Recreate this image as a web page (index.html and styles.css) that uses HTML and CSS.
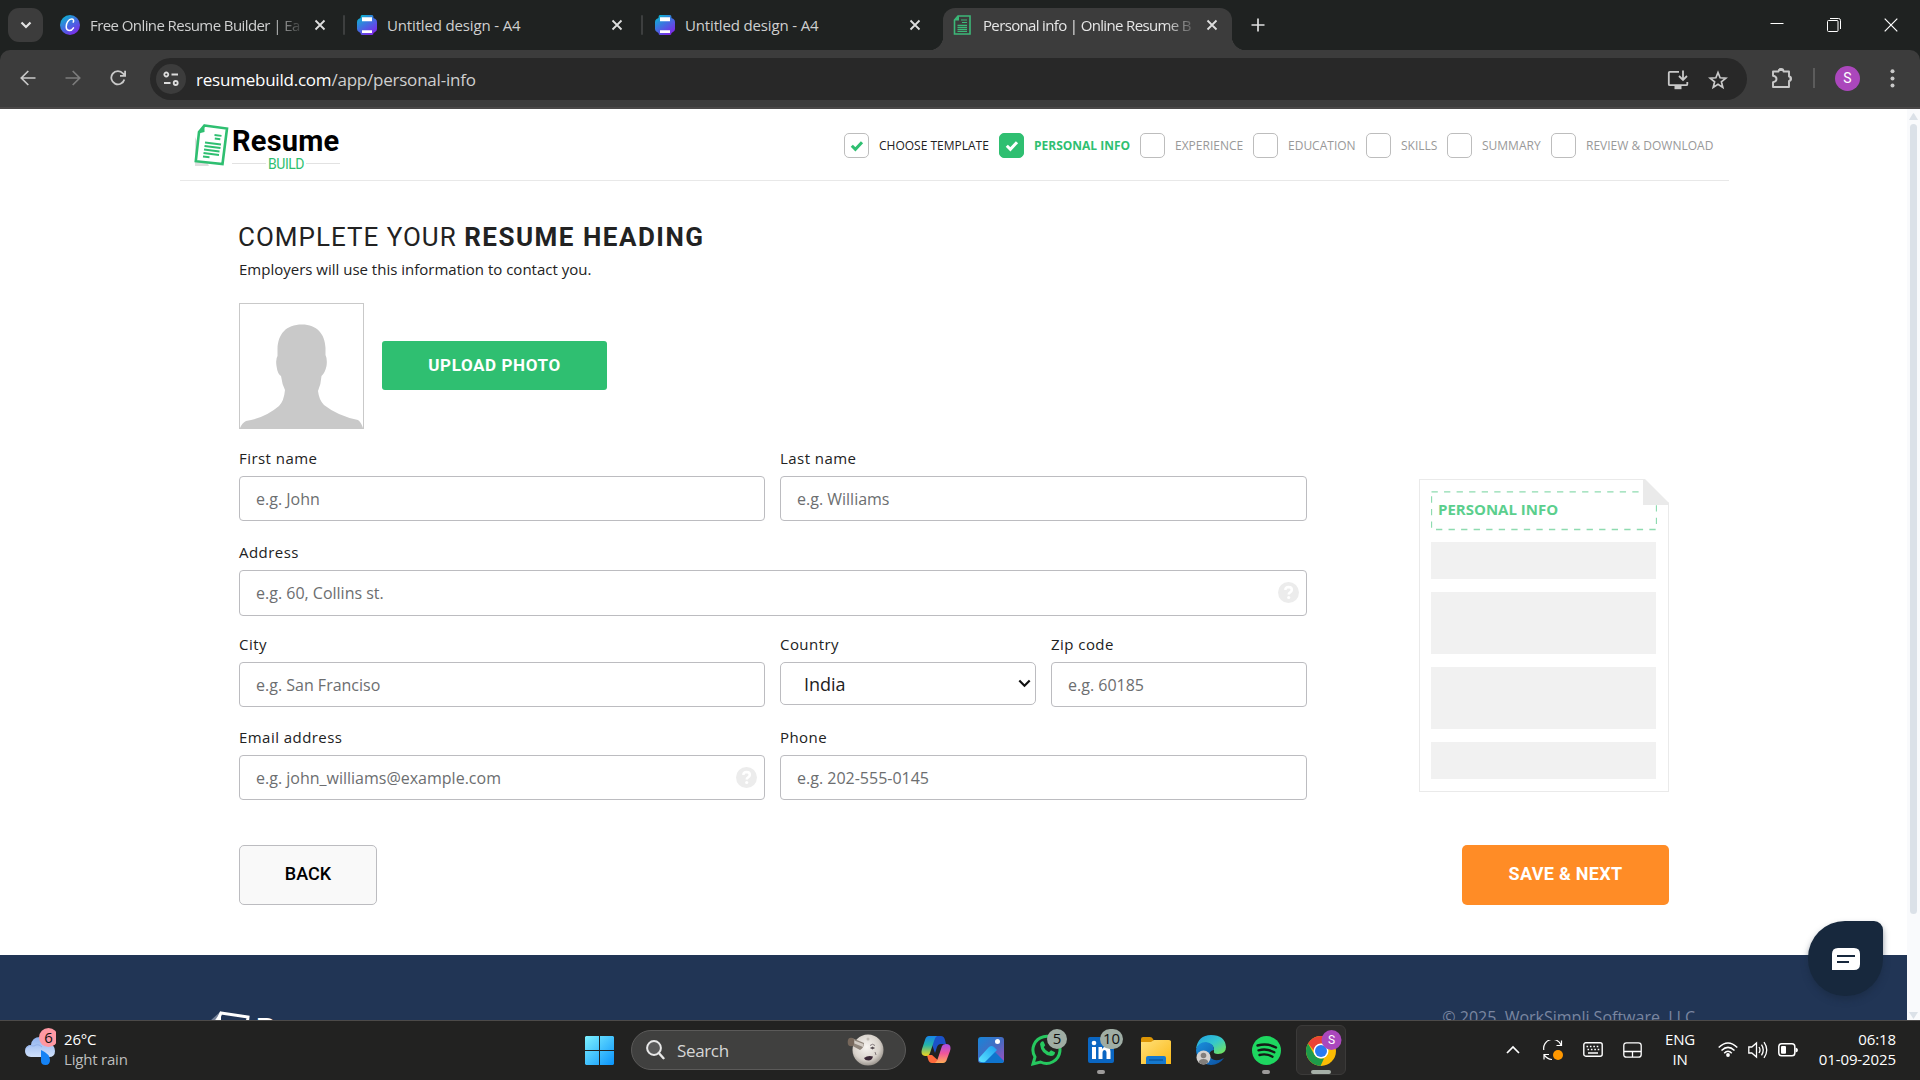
FILE: index.html
```html
<!DOCTYPE html>
<html lang="en">
<head>
<meta charset="utf-8">
<title>Personal info | Online Resume Builder</title>
<link rel="stylesheet" href="styles.css">
</head>
<body>
<svg class="defs" width="0" height="0" aria-hidden="true">
  <defs>
    <linearGradient id="canva" x1="0" y1="0" x2=".7" y2="1"><stop offset="0" stop-color="#00c4cc"/><stop offset=".5" stop-color="#3d73e0"/><stop offset="1" stop-color="#7d2ae8"/></linearGradient>
    <linearGradient id="win" x1="0" y1="0" x2="1" y2="1"><stop offset="0" stop-color="#7df1ff"/><stop offset="1" stop-color="#0a93fb"/></linearGradient>
    <linearGradient id="cloud" x1="0" y1="0" x2="0" y2="1"><stop offset="0" stop-color="#8fb2ee"/><stop offset="1" stop-color="#cfe0fb"/></linearGradient>
    <linearGradient id="cpL" x1="0" y1="0" x2="0" y2="1"><stop offset="0" stop-color="#1784ea"/><stop offset=".45" stop-color="#25b5a8"/><stop offset="1" stop-color="#f3d51c"/></linearGradient>
    <linearGradient id="cpR" x1="0" y1="0" x2="0" y2="1"><stop offset="0" stop-color="#a64ee8"/><stop offset=".5" stop-color="#f0569a"/><stop offset="1" stop-color="#ffad56"/></linearGradient>
    <linearGradient id="photo" x1="0" y1="0" x2="1" y2="1"><stop offset="0" stop-color="#1686d9"/><stop offset=".55" stop-color="#4a69c0"/><stop offset="1" stop-color="#a24fc0"/></linearGradient>
    <linearGradient id="hill" x1="0" y1="1" x2="1" y2="0"><stop offset="0" stop-color="#5ce4ff"/><stop offset="1" stop-color="#1b9df0"/></linearGradient>
    <linearGradient id="folder" x1="0" y1="0" x2="1" y2="1"><stop offset="0" stop-color="#ffe07a"/><stop offset="1" stop-color="#fbb917"/></linearGradient>
    <linearGradient id="edge1" x1="0" y1="0" x2="1" y2="1"><stop offset="0" stop-color="#1f9fe5"/><stop offset=".5" stop-color="#35c7cd"/><stop offset="1" stop-color="#7be84e"/></linearGradient>
    <linearGradient id="edge2" x1="0" y1="0" x2="1" y2="1"><stop offset="0" stop-color="#1a90dd"/><stop offset="1" stop-color="#0b4fa0"/></linearGradient>
    <radialGradient id="moon" cx=".45" cy=".4" r=".65"><stop offset="0" stop-color="#f8f5f1"/><stop offset=".65" stop-color="#d8d2cb"/><stop offset="1" stop-color="#8d8780"/></radialGradient>
    <symbol id="i-x" viewBox="0 0 12 12"><path d="M1.5 1.5l9 9M10.5 1.5l-9 9" stroke="#dedede" stroke-width="1.8" fill="none"/></symbol>
    <symbol id="i-design" viewBox="0 0 20 20"><path d="M5 0h10q1.500 0 1.500 3l2 1q1.500.8 1.500 3v7q0 2-2 3l-1.500 1q0 2-1.500 2H5q-1.500 0-1.500-2L2 17q-2-1-2-3V7q0-2 1.500-3l2-1q0-3 1.500-3z" fill="url(#canva)"/><path d="M5 2.200h10v4H5zM5 15.300h10v2.600H5z" fill="#fff"/></symbol>
    <symbol id="i-help" viewBox="0 0 20 20"><circle cx="10" cy="10" r="10" fill="#ececec"/><path d="M6.900 7.600Q7.200 4.800 10.100 4.800 13.200 4.900 13.200 7.500 13.100 9 11.500 9.800 10.200 10.500 10.200 12" fill="none" stroke="#fff" stroke-width="2.400"/><circle cx="10.200" cy="14.800" r="1.500" fill="#fff"/></symbol>
  </defs>
</svg>

<div class="tabstrip">
  <button class="tab-search" aria-label="Search tabs"><svg width="12" height="8" viewBox="0 0 12 8"><path d="M1.500 1.500L6 6l4.500-4.500" fill="none" stroke="#e3e3e3" stroke-width="2.200"/></svg></button>
  <div class="tab tab-first">
    <svg class="fav" viewBox="0 0 20 20"><circle cx="10" cy="10" r="10" fill="url(#canva)"/><path d="M13.200 7.200c1-1.600.3-3.200-1.600-3.100C8.600 4.200 6 8.200 6.200 12c.2 4.500 5 4.600 7.300.8" fill="none" stroke="#fff" stroke-width="1.500" stroke-linecap="round"/></svg>
    <span class="tab-title fade t1">Free Online Resume Builder | Ea</span>
    <svg class="tab-x"><use href="#i-x"/></svg>
  </div>
  <i class="tab-sep"></i>
  <div class="tab">
    <svg class="fav"><use href="#i-design"/></svg>
    <span class="tab-title">Untitled design - A4</span>
    <svg class="tab-x"><use href="#i-x"/></svg>
  </div>
  <i class="tab-sep"></i>
  <div class="tab">
    <svg class="fav"><use href="#i-design"/></svg>
    <span class="tab-title">Untitled design - A4</span>
    <svg class="tab-x"><use href="#i-x"/></svg>
  </div>
  <div class="tab active">
    <svg class="fav" viewBox="0 0 20 20"><path d="M5 1h12v18H1.500V5z" fill="none" stroke="#3cb878" stroke-width="1.600"/><path d="M1 5.500L6 .5v5z" fill="#3cb878"/><path d="M8 5h6M9 7.500h5M4.500 10.300h9.500M4.500 12.300h9.500M4.500 14.300h9.500M4.500 16.300h9.500" stroke="#3cb878" stroke-width="1.200"/></svg>
    <span class="tab-title fade t4">Personal info | Online Resume B</span>
    <svg class="tab-x"><use href="#i-x"/></svg>
  </div>
  <svg class="plus" width="14" height="14" viewBox="0 0 14 14"><path d="M7 .5v13M.5 7h13" stroke="#dedede" stroke-width="1.700"/></svg>
  <div class="win-controls">
    <svg width="14" height="14" viewBox="0 0 14 14"><path d="M.5 5.500h13" stroke="#fff"/></svg>
    <svg width="14" height="14" viewBox="0 0 14 14" fill="none" stroke="#fff"><rect x=".5" y="2.500" width="10.500" height="11" rx="1"/><path d="M3 .5h8.500q2 0 2 2V11"/></svg>
    <svg width="14" height="14" viewBox="0 0 14 14"><path d="M.7.700l12.600 12.600M13.300.7L.7 13.300" stroke="#fff" stroke-width="1.200"/></svg>
  </div>
</div>

<div class="toolbar">
  <svg class="nav-ic" viewBox="0 0 16 16"><path d="M15.500 8H1.500M8.300 1L1.300 8l7 7" fill="none" stroke="#c9c9c9" stroke-width="1.700"/></svg>
  <svg class="nav-ic" viewBox="0 0 16 16"><path d="M.5 8h14M7.700 1l7 7-7 7" fill="none" stroke="#7c7c7c" stroke-width="1.700"/></svg>
  <svg class="nav-ic" viewBox="0 0 16 16"><path d="M14.300 9.400A6.600 6.600 0 1 1 13 3.500L15 5.500M15.100.8v5H10" fill="none" stroke="#c9c9c9" stroke-width="1.800"/></svg>
  <div class="omnibox">
    <span class="site-info"><svg width="16" height="16" viewBox="0 0 16 16" fill="none" stroke="#dcdcdc" stroke-width="1.800"><circle cx="3.300" cy="3.500" r="2"/><path d="M8.500 3.500H15M1 12h6.500"/><circle cx="12.700" cy="12" r="2"/></svg></span>
    <span class="url">resumebuild.com<span>/app/personal-info</span></span>
    <svg class="install" width="22" height="20" viewBox="0 0 22 20" fill="none" stroke="#c9c9c9" stroke-width="1.800"><path d="M12 1.800H2.800q-1 0-1 1v11.400q0 1 1 1h16.500q1 0 1-1V12"/><path d="M7.500 17.500h7" stroke-width="3.400"/><path d="M16 .5v9M12 6l4 4 4-4"/></svg>
    <svg width="20" height="20" viewBox="0 0 20 20"><path d="M10 2.500l2.100 5.300 5.700.4-4.400 3.600 1.400 5.600-4.800-3.100-4.800 3.100 1.400-5.600-4.400-3.600 5.700-.4z" fill="none" stroke="#c9c9c9" stroke-width="1.700"/></svg>
  </div>
  <svg class="puzzle" width="22" height="22" viewBox="0 0 22 22"><path d="M2 4.500h5.500q0-2.500 2.500-2.500t2.500 2.500H18v5q2 0 2 2.200T18 14v6H2v-4.800q3.500-.6 3.500-3.200T2 8.800z" fill="none" stroke="#c9c9c9" stroke-width="1.900" stroke-linejoin="round"/><path d="M7.700 4q0-2.400 2.300-2.400T12.300 4zM18.500 9.500q2.200 0 2.200 2.300T18.500 14z" fill="#c9c9c9"/></svg>
  <i class="bar-sep"></i>
  <span class="avatar">S</span>
  <svg class="dots" width="5" height="19" viewBox="0 0 5 19" fill="#c9c9c9"><circle cx="2.500" cy="2.300" r="2"/><circle cx="2.500" cy="9.400" r="2"/><circle cx="2.500" cy="16.500" r="2"/></svg>
</div>

<div class="viewport">
  <div class="page">
    <header class="site-header">
      <div class="logo">
        <svg width="36" height="44" viewBox="0 0 36 44"><path d="M1 14v29h14z" fill="#dedede"/><path d="M10.500 2.500L33 5.500 28.500 41 1.800 38.200 5 9z" fill="#fff" stroke="#2fbf71" stroke-width="2.600"/><path d="M4.500 10.500L10.500 2v7z" fill="#2fbf71"/><path d="M20.500 12l7 .9M20.800 15.500l5.500.7M11 19.500l16 2M10.500 23l16 2M10 26.500l15.500 2M9.500 30l15.500 2M9 33.500l6.500.8" stroke="#2fbf71" stroke-width="1.900"/></svg>
        <div class="logo-words"><b>Resume</b><span>BUILD</span></div>
      </div>
      <ol class="steps">
        <li class="done"><i><svg width="14" height="12" viewBox="0 0 14 12"><path d="M1.800 5.700l3.600 3.600L12 2.200" fill="none" stroke="#2fbf71" stroke-width="3"/></svg></i><span class="s1">CHOOSE TEMPLATE</span></li>
        <li class="current"><i><svg width="14" height="12" viewBox="0 0 14 12"><path d="M1.800 5.700l3.600 3.600L12 2.200" fill="none" stroke="#fff" stroke-width="3"/></svg></i><span class="s2">PERSONAL INFO</span></li>
        <li><i></i><span class="s3">EXPERIENCE</span></li>
        <li><i></i><span class="s4">EDUCATION</span></li>
        <li><i></i><span class="s5">SKILLS</span></li>
        <li><i></i><span class="s6">SUMMARY</span></li>
        <li><i></i><span class="s7">REVIEW &amp; DOWNLOAD</span></li>
      </ol>
    </header>

    <main>
      <h1><span>COMPLETE YOUR</span> <b>RESUME HEADING</b></h1>
      <p class="lead">Employers will use this information to contact you.</p>
      <div class="photo-row">
        <div class="photo"><svg width="123" height="124" viewBox="0 0 123 124"><path d="M62 20.500C46 20.500 38 30 37.500 45V52Q35.500 55 36.500 62 37.500 70 41 72 42 80 45 86 44 97 39 102 25 114 6 117 2 119 0 124H123Q121 118 118 116 98 112 84 101 79 96 78 87 81 80 81.500 72 85 69 86.500 62 87.500 55 85.500 51V44C85 30 77 20.500 62 20.500z" fill="#c9c9c9"/></svg></div>
        <button class="upload">UPLOAD PHOTO</button>
      </div>
      <div class="columns">
        <form class="form">
          <label class="field half r1"><span>First name</span><input placeholder="e.g. John"></label>
          <label class="field half r1"><span>Last name</span><input placeholder="e.g. Williams"></label>
          <label class="field full r2"><span>Address</span><input placeholder="e.g. 60, Collins st."><svg class="help"><use href="#i-help"/></svg></label>
          <label class="field half r3"><span>City</span><input placeholder="e.g. San Franciso"></label>
          <label class="field quarter r3"><span>Country</span><div class="select">India<svg width="13" height="9" viewBox="0 0 13 9"><path d="M1.300 1.500l5.200 5.200 5.200-5.200" fill="none" stroke="#111" stroke-width="2.200"/></svg></div></label>
          <label class="field quarter r3"><span>Zip code</span><input placeholder="e.g. 60185"></label>
          <label class="field half"><span>Email address</span><input placeholder="e.g. john_williams@example.com"><svg class="help"><use href="#i-help"/></svg></label>
          <label class="field half"><span>Phone</span><input placeholder="e.g. 202-555-0145"></label>
        </form>
        <aside class="doc">
          <div class="doc-title"><svg width="226" height="40" viewBox="0 0 226 40"><path d="M.5 .8H225.500V38.500H.5z" fill="none" stroke="#8edbb0" stroke-width="1.300" stroke-dasharray="6.300 6.250"/></svg><span>PERSONAL INFO</span></div>
          <div class="block s"></div><div class="block"></div><div class="block"></div><div class="block s"></div>
          <svg class="fold" width="26" height="26" viewBox="0 0 26 26"><path d="M1 0h25v24z" fill="#fff"/><path d="M0 0h2l24 24v2H0z" fill="#eaeaea"/></svg>
        </aside>
      </div>
      <div class="actions"><button class="back">BACK</button><button class="next">SAVE &amp; NEXT</button></div>
    </main>

    <footer class="site-footer">
      <div class="foot-logo"><svg width="44" height="50" viewBox="0 0 44 50"><path d="M1 10l10-9v9z" fill="#77839a"/><path d="M12 2l27 4-5 40-30-4L9 9z" fill="none" stroke="#fff" stroke-width="3"/><path d="M4 12L12 1v9z" fill="#fff"/></svg><b>Resume</b></div>
      <span>© 2025, WorkSimpli Software, LLC</span>
    </footer>
  </div>
  <div class="scrollbar"><svg width="9" height="7" viewBox="0 0 9 7"><path d="M4.500 0Q5 0 9 7H0Q4 0 4.500 0z" fill="#dbe1e8"/></svg><i></i><svg width="9" height="7" viewBox="0 0 9 7"><path d="M0 0h9L4.500 7z" fill="#dbe1e8"/></svg></div>
  <button class="chat" aria-label="Chat"><svg width="28" height="22" viewBox="0 0 28 22"><path d="M6 0h16q6 0 6 6v10q0 6-6 6H0V6q0-6 6-6z" fill="#fff"/><path d="M5 8h18M5 14h12" stroke="#17283d" stroke-width="2"/></svg></button>
</div>

<div class="taskbar">
  <div class="weather">
    <svg width="32" height="40" viewBox="0 0 32 40"><path d="M7 29q-6-.5-6-6t6-6Q8 9 16 9q7 0 9 7 6 1 6 7t-6 6z" fill="url(#cloud)"/><path d="M2 20q3-4 8-2 4-3 8 1" fill="none" stroke="#93b2ea"/><path d="M17 22q9 4 9 10 0 5-4.500 5T17 33z" fill="#1583f5"/><circle cx="24.500" cy="9.500" r="9.500" fill="#ff99a4"/><text x="24.500" y="14.500" class="badge-num">6</text></svg>
    <div><b>26°C</b><span>Light rain</span></div>
  </div>
  <div class="apps">
    <svg class="app-win" width="29" height="29" viewBox="0 0 29 29" fill="url(#win)"><path d="M1 0h13v14H0V1zM15 0h13l1 1v13H15zM0 15h14v14H1l-1-1zM15 15h14v13l-1 1H15z"/></svg>
    <div class="search">
      <svg width="19" height="20" viewBox="0 0 19 20"><circle cx="8" cy="8" r="6.900" fill="#5a5a5a" stroke="#e8e8e8" stroke-width="2"/><path d="M12.800 13l4.700 5.200" stroke="#e8e8e8" stroke-width="2.400" stroke-linecap="round"/></svg>
      <span>Search</span>
      <svg class="moon" width="37" height="32" viewBox="0 0 37 32"><circle cx="21" cy="16" r="15.500" fill="url(#moon)"/><path d="M5 4l12 5q0 5-4 7L2 10z" fill="#8f857b"/><path d="M6 6l10.500 4-.5 3L5 8.500z" fill="#d3ccc4"/><ellipse cx="4" cy="8" rx="3.300" ry="4.300" fill="#76675b"/><path d="M23 11.500q2.500-2.500 5 0M23.500 14q2-2 4 0-2 2-4 0M28 18l1 3" fill="none" stroke="#776d70" stroke-width=".9"/><circle cx="25.500" cy="14" r="1" fill="#4b4246"/><path d="M17 24q4-3 9-1.500-1 4-4.500 4T17 24z" fill="#3b2837"/><circle cx="21" cy="5" r="1.500" fill="#c3bcb4"/></svg>
    </div>
    <svg class="app-copilot" width="30" height="28" viewBox="0 0 30 28"><path d="M8 0h12q3 0 4 4l1 4h-5q-3 0-4 3l-2 6" fill="#1b52c8"/><path d="M20 27H11q-3 0-4-4l-1-4h5z" fill="#ff6a3c"/><path d="M8 0h8q-2 1-3 5L9 17q-1 3-4 3-6 0-4-7L4 4q1-4 4-4z" fill="url(#cpL)"/><path d="M22 27h-8q2-1 3-5l4-12q1-2 4-2 6 0 4 7l-3 8q-1 4-4 4z" fill="url(#cpR)"/></svg>
    <svg class="app-photos" width="26" height="26" viewBox="0 0 26 26"><rect width="26" height="26" rx="3" fill="url(#photo)"/><path d="M2 25L14 12l12 12q0 2-3 2H3z" fill="#0f74cd"/><path d="M1 21L11 10q2.500-2 5 0l3 3-12 12q-3 1-6-1z" fill="url(#hill)"/><circle cx="19.500" cy="4.500" r="2.500" fill="#fff"/></svg>
    <svg class="app-wa" width="36" height="38" viewBox="0 0 36 38"><path d="M2 35l2-7A13.500 13.500 0 1 1 9.500 33z" fill="none" stroke="#26c85f" stroke-width="3"/><path d="M9 15q1-3.500 3.500-2.500l1.700 3.700-1.400 2q1.500 3.500 5.200 5l2-2 4 2q0 3.500-4 3.800Q10 25.500 9 15z" fill="#26c85f"/><circle cx="26" cy="10" r="10" fill="#9fada4"/><text x="26" y="15" class="badge-num">5</text></svg>
    <div class="app running in"><svg width="36" height="38" viewBox="0 0 36 38"><rect y="8" width="26" height="26" rx="2" fill="#0a66c2"/><path d="M4 18h4v12H4zM10.500 18h3.500v2q1.500-2.300 4-2.300 4.500 0 4.500 5.300v7h-4v-6.500q0-2.500-2-2.500t-2 2.500V30h-4z" fill="#fff"/><circle cx="6" cy="14" r="2.300" fill="#fff"/><rect x="12" width="23" height="20" rx="10" fill="#9fada4"/><text x="23.500" y="15" class="badge-num">10</text></svg><i></i></div>
    <svg class="app-folder" width="30" height="27" viewBox="0 0 30 27"><path d="M0 2q0-2 2-2h7q2 0 3 2l1 2h17v8H0z" fill="#dc9505"/><path d="M0 5h10l3-2h15q2 0 2 2v22H0z" fill="url(#folder)"/><path d="M5 27v-6q0-2 2-2h16q2 0 2 2v6z" fill="#1579cf"/><path d="M8 23h14" stroke="#075096" stroke-width="1.200"/></svg>
    <svg class="app-edge" width="30" height="30" viewBox="0 0 30 30"><path d="M0 14Q2 0 15 0q14 0 15 12 0 7-8 7-5 0-4-3 1-7-8-8Q3 8 0 14z" fill="url(#edge1)"/><path d="M0 15Q2 7 10 7q8 1 8 8-6 1-4 7 5 6 14 1-5 7-13 7Q1 29 0 15z" fill="url(#edge2)"/><circle cx="7.500" cy="22.500" r="7" fill="#d3d1cf"/><circle cx="7.500" cy="20.500" r="2.800" fill="#817e7b"/><path d="M2.800 27.500q0-3.500 4.700-3.500t4.700 3.500q-4.700 4-9.400 0z" fill="#817e7b"/></svg>
    <div class="app running sp"><svg width="29" height="29" viewBox="0 0 29 29"><circle cx="14.500" cy="14.500" r="14.500" fill="#1ed760"/><path d="M5.500 9.500q10-2.700 18.500 2M6.500 14.300q8.500-2.200 15.800 2M7.500 19q7-1.800 13 1.700" fill="none" stroke="#141a16" stroke-width="2.400" stroke-linecap="round"/></svg><i></i></div>
    <div class="app running chrome"><svg width="37" height="36" viewBox="0 0 37 36"><circle cx="15" cy="21" r="15" fill="#fbbc04"/><path d="M2 13.500A15 15 0 0 1 28 13.500H15Q9 14 8.500 21z" fill="#ea4335"/><path d="M2 13.500l6.500 11.250Q11 28.500 15 28.500h0l3 .0L14.500 36A15 15 0 0 1 2 13.500z" fill="#1e9b4a"/><circle cx="15" cy="21" r="7.500" fill="#fff"/><circle cx="15" cy="21" r="6" fill="#2a7af0"/><circle cx="25.500" cy="10" r="10" fill="#aa47bc"/><text x="25.500" y="14.200" class="badge-s">S</text></svg><i></i></div>
  </div>
  <div class="tray">
    <svg class="t-caret" width="14" height="9" viewBox="0 0 14 9"><path d="M1 8l6-6 6 6" fill="none" stroke="#fff" stroke-width="1.700"/></svg>
    <svg class="t-sync" width="21" height="21" viewBox="0 0 21 21" fill="none" stroke="#fff" stroke-width="1.200"><path d="M.8 10A9 9 0 0 1 18 5M18.500.5V5.500h-5M1 19.500v-5h5M1.200 14.800Q4 19 9 19.500"/><circle cx="15" cy="15" r="5" fill="#ff9800" stroke="none"/></svg>
    <svg class="t-kb" width="20" height="15" viewBox="0 0 20 15"><rect x=".8" y=".8" width="18.400" height="13.400" rx="2" fill="none" stroke="#fff" stroke-width="1.400"/><path d="M3.500 4.500h13.500M4.500 7.500h12" stroke="#fff" stroke-width="1.600" stroke-dasharray="1.600 1.800"/><path d="M5 11h10" stroke="#fff" stroke-width="1.500"/></svg>
    <svg class="t-pad" width="19" height="16" viewBox="0 0 19 16"><path d="M3.500.8h12q2.700 0 2.700 2.700v9q0 2.700-2.700 2.700h-12Q.8 15.200.8 12.500v-9Q.8.8 3.500.8zM.8 9.500h17.400M9.500 9.500v5.500" fill="none" stroke="#fff" stroke-width="1.300"/></svg>
    <div class="lang"><span>ENG</span><span>IN</span></div>
    <svg class="t-wifi" width="20" height="15" viewBox="0 0 20 15" fill="none" stroke="#fff" stroke-width="1.500"><path d="M.7 5.500q9.300-9 18.600 0M3.500 8.500q6.500-6.300 13 0M6.200 11.200q3.800-3.800 7.600 0"/><circle cx="10" cy="13" r="1.900" fill="#fff" stroke="none"/></svg>
    <svg class="t-vol" width="20" height="18" viewBox="0 0 20 18" fill="none" stroke="#fff" stroke-width="1.300"><path d="M.8 6h3l4.700-4v14L3.800 12h-3zM11 6q2 3 0 6M13.500 3.700q3.500 5.300 0 10.600M16 1.200q5.500 7.800 0 15.600"/></svg>
    <svg class="t-bat" width="20" height="14" viewBox="0 0 20 14"><rect x=".8" y=".8" width="16" height="12" rx="2.800" fill="none" stroke="#fff" stroke-width="1.500"/><rect x="3" y="3" width="5" height="7.700" rx="1" fill="#fff"/><path d="M17.500 4.500q2.500.5 2.500 2.500t-2.500 2.500z" fill="#fff"/></svg>
    <div class="clock"><span>06:18</span><span>01-09-2025</span></div>
  </div>
</div>
</body>
</html>
```

FILE: styles.css
```css
* { box-sizing: border-box; }
html, body { margin: 0; height: 100%; overflow: hidden; }
body { width: 1920px; height: 1080px; display: flex; flex-direction: column; background: #1f2221; font-family: "Open Sans", "Noto Sans", sans-serif; color: #222; }
svg { display: block; flex: none; }
.defs { position: absolute; }
button { font: inherit; border: 0; padding: 0; margin: 0; display: flex; align-items: center; justify-content: center; }

/* tab strip */
.tabstrip { height: 50px; flex: none; display: flex; align-items: center; padding-left: 8px; background: #1f2221; color: #cfd0d0; }
.tab-search { width: 35px; height: 34px; border-radius: 11px; background: #3c3c3c; }
.tab { width: 297px; height: 42px; display: flex; align-items: center; padding: 0 18px 0 13px; }
.tab-first { width: 300px; padding: 0 17px; }
.tab-sep { width: 2px; height: 20px; margin-right: -1px; border-radius: 1px; background: #3d3f3f; }
.fav { width: 20px; height: 20px; margin-right: 10px; }
.tab-title { flex: 1; overflow: hidden; white-space: nowrap; font: 15px/22px "Open Sans", sans-serif; letter-spacing: -.15px; }
.t1 { letter-spacing: -.58px; }
.t4 { letter-spacing: -.65px; }
.fade { -webkit-mask-image: linear-gradient(90deg, #000 182px, transparent 216px); mask-image: linear-gradient(90deg, #000 182px, transparent 216px); }
.tab-x { width: 12px; height: 12px; }
.tab.active { position: relative; width: 289px; height: 42px; margin: 8px 0 0 4px; padding: 0 14px 8px 10px; border-radius: 12px 12px 0 0; background: #3c3c3c; color: #e6e6e6; }
.tab.active::before, .tab.active::after { content: ""; position: absolute; bottom: 0; width: 14px; height: 14px; }
.tab.active::before { left: -14px; background: radial-gradient(circle at 0 0, transparent 14px, #3c3c3c 14.500px); }
.tab.active::after { right: -14px; background: radial-gradient(circle at 100% 0, transparent 14px, #3c3c3c 14.500px); }
.plus { margin-left: 19px; }
.win-controls { margin-left: auto; display: flex; gap: 43px; padding-right: 22px; }

/* toolbar */
.toolbar { height: 59px; flex: none; display: flex; align-items: center; padding: 0 0 1px 20px; background: #3c3c3c; border-bottom: 2px solid #4a4848; border-radius: 10px 10px 0 0; }
.nav-ic { width: 16px; height: 16px; margin-right: 29px; }
.nav-ic:nth-child(3) { margin-right: 24px; }
.omnibox { width: 1597px; height: 42px; display: flex; align-items: center; padding: 2px 19px 0 6px; margin-top: 2px; border-radius: 21px; background: #282828; }
.site-info { width: 30px; height: 30px; margin-top: -2px; border-radius: 50%; background: #3c3c3c; display: flex; align-items: center; justify-content: center; }
.url { flex: 1; margin-left: 10px; font-size: 17px; line-height: 24px; letter-spacing: -.22px; color: #fff; }
.url span { color: #cfcfcf; }
.install { margin-right: 19px; }
.puzzle { margin-left: 24px; }
.bar-sep { width: 2px; height: 20px; margin: 0 20px 0 20px; background: #5c5c5c; }
.avatar { width: 25px; height: 25px; border-radius: 50%; background: #ab47bc; color: #fff; font: 14px/25px Roboto, sans-serif; text-align: center; }
.dots { margin-left: 30px; }

/* page */
.viewport { position: relative; height: 911px; flex: none; display: flex; background: #fff; overflow: hidden; }
.page { width: 1907px; height: 911px; overflow: hidden; display: flex; flex-direction: column; }
.scrollbar { width: 13px; display: flex; flex-direction: column; align-items: center; justify-content: space-between; padding: 4px 0 1px; background: #f9fafc; }
.scrollbar i { width: 7px; height: 790px; margin: 4px 0 auto; border-radius: 4px; background: #dbe1e8; }
.site-header { width: 1549px; height: 72px; margin-left: 180px; flex: none; padding: 2px 15px 0 14px; display: flex; align-items: center; justify-content: space-between; border-bottom: 1px solid #e8e8e8; }
.logo { display: flex; height: 44px; margin-bottom: 2px; }
.logo-words { display: flex; flex-direction: column; width: 108px; margin: 1px 0 0 2px; }
.logo-words b { font: 700 29px/34px Roboto, sans-serif; color: #000; letter-spacing: .2px; }
.logo-words span { display: flex; align-items: center; gap: 2px; font: 400 14px/16px Roboto, sans-serif; margin-top: -2px; letter-spacing: -.5px; color: #2fbf71; }
.logo-words span::before, .logo-words span::after { content: ""; flex: 1; height: 1px; background: #e2e2e2; }
.steps { display: flex; list-style: none; margin: 0; padding: 0; gap: 10px; font-size: 12px; line-height: 16px; color: #999; }
.steps li { display: flex; align-items: center; gap: 10px; white-space: nowrap; }
.steps i { width: 25px; height: 25px; border: 1px solid #bdbdbd; border-radius: 5px; display: flex; align-items: center; justify-content: center; }
.steps .done { color: #222; }
.steps .current { color: #2fbf71; font-weight: 700; }
.steps .current i { background: #2fbf71; border-color: #2fbf71; }
.s1 { width: 110px; } .s2 { width: 96px; } .s3, .s4 { width: 68px; } .s5 { width: 36px; } .s6 { width: 59px; } .s7 { width: 128px; }

main { height: 774px; flex: none; padding: 39px 0 0 239px; }
h1 { margin: 0 0 0 -1px; font: 400 26px/34px Roboto, sans-serif; letter-spacing: 1px; color: #222; }
h1 b { letter-spacing: 1.500px; }
.lead { margin: 5px 0 0; font-size: 15px; line-height: 20px; }
.photo-row { margin-top: 24px; display: flex; align-items: center; gap: 18px; }
.photo { width: 125px; height: 126px; border: 1px solid #c9c9c9; }
.upload { width: 225px; height: 49px; margin-bottom: 1px; border-radius: 3px; background: #2fbf71; color: #fff; font: 700 17px/20px Roboto, sans-serif; letter-spacing: .6px; padding-bottom: 1px; }
.columns { display: flex; gap: 112px; margin-top: 19px; }
.form { width: 1068px; display: grid; grid-template-columns: 526px 256px 256px; column-gap: 15px; align-content: start; }
.field { position: relative; display: flex; flex-direction: column; gap: 8px; }
.field:nth-child(2), .field:nth-child(8) { grid-column: 2 / 4; }
.full { grid-column: 1 / 4; }
.field > span { font-size: 15px; line-height: 20px; letter-spacing: .45px; }
.field input { width: 100%; height: 45px; border: 1px solid #bcbcc0; border-radius: 4px; padding: 1px 16px 0; background: #fff; font: 16px "Open Sans", sans-serif; }
.field input::placeholder { color: #6c6e70; opacity: 1; }
.full input { height: 46px; padding: 0 16px 1px; }
.r1 { margin-bottom: 21px; } .r2 { margin-bottom: 18px; } .r3 { margin-bottom: 20px; }
.help { position: absolute; right: 8px; top: 40px; width: 21px; height: 21px; }
.select { height: 43px; border: 1px solid #bcbcc0; border-radius: 5px; display: flex; align-items: center; justify-content: space-between; padding: 0 4px 0 23px; font-size: 18px; }
.doc { position: relative; width: 250px; height: 313px; margin-top: 31px; border: 1px solid #eaeaea; padding: 11px 0 0 11px; display: flex; flex-direction: column; gap: 12.500px; }
.fold { position: absolute; right: -1px; top: -1px; }
.doc-title { position: relative; height: 38px; width: 225px; padding-left: 7px; font: 700 15px/36px "Open Sans", sans-serif; color: #5bcf8d; }
.doc-title svg { position: absolute; left: 0; top: 0; }
.block { width: 225px; height: 62.500px; background: #f1f1f1; }
.block.s { height: 37.500px; }
.actions { width: 1430px; display: flex; justify-content: space-between; margin-top: 45px; }
.back, .next { height: 60px; border-radius: 5px; font: 500 18px/22px Roboto, sans-serif; padding-bottom: 3px; }
.back { width: 138px; border: 1px solid #bcbcc0; background: #f9f9f9; color: #000; }
.next { width: 207px; background: #ff8c26; color: #fff; font-weight: 700; letter-spacing: .3px; }
.site-footer { height: 160px; flex: none; display: flex; align-items: flex-start; padding: 51px 212px 0 209px; background: #213555; color: #7a86a0; font-size: 16px; line-height: 22px; justify-content: space-between; }
.foot-logo { display: flex; color: #fff; margin-top: 5px; }
.foot-logo b { font: 700 31px/32px Roboto, sans-serif; margin: 3px 0 0 3px; }
.chat { position: absolute; left: 1808px; top: 812px; width: 75px; height: 75px; padding: 1px 0 0 1px; border-radius: 37px 9px 37px 37px; background: #17283d; box-shadow: 0 4px 6px rgba(23, 40, 61, .5); }

/* taskbar */
.taskbar { position: relative; height: 60px; flex: none; display: flex; background: #222221; border-top: 1px solid #4c4a49; color: #fff; font-size: 15px; line-height: 20px; }
.taskbar span, .taskbar b { font-weight: 400; letter-spacing: -.2px; white-space: nowrap; }
.weather { display: flex; width: 585px; padding: 7px 0 0 24px; }
.weather > div { display: flex; flex-direction: column; padding: 1px 0 0 8px; }
.weather span { color: #bdbdbd; }
.badge-num { font: 15px "Open Sans", sans-serif; text-anchor: middle; fill: #111; }
.badge-s { font: 12px Roboto, sans-serif; text-anchor: middle; fill: #fff; }
.apps { display: flex; align-items: flex-start; width: 921px; }
.app-win { margin-top: 15px; }
.search { margin: 9px 15px 0 17px; width: 275px; height: 40px; border: 1px solid #5b5a59; border-radius: 20px; background: #40403f; display: flex; align-items: center; padding: 0 21px 0 14px; }
.search span { flex: 1; margin: 1px 0 0 12px; font-size: 17px; letter-spacing: -.35px; color: #d6d6d6; }
.app-copilot { margin-top: 15px; }
.app-photos { margin: 16px 0 0 27px; }
.app-wa { margin: 8px 0 0 27px; }
.app { position: relative; display: flex; flex-direction: column; }
.app i { position: absolute; bottom: 0; height: 4px; width: 8px; border-radius: 2px; background: #9d9b9a; }
.in { height: 53px; margin-left: 21px; padding-top: 8px; }
.in i { left: 9px; }
.app-folder { margin: 16px 0 0 17px; }
.app-edge { margin: 14px 0 0 25px; }
.sp { height: 53px; margin-left: 26px; padding-top: 15px; }
.sp i { left: 10px; }
.chrome { width: 50px; height: 50px; margin: 4px 0 0 15px; padding: 4px 0 0 10px; border: 1px solid #3b3a39; border-radius: 6px; background: #2e2d2c; }
.chrome svg { margin-left: -1px; }
.app.chrome i { left: 14px; bottom: 0; width: 20px; background: #a6b0a8; }
.tray { display: flex; align-items: flex-start; }
.t-caret { margin-top: 24px; }
.t-sync { margin: 19px 0 0 23px; }
.t-kb { margin: 21px 0 0 19px; }
.t-pad { margin: 21px 0 0 20px; }
.lang, .clock { display: flex; flex-direction: column; padding-top: 8px; }
.lang { width: 76px; align-items: center; }
.t-wifi { margin-top: 21px; }
.t-vol { margin: 20px 0 0 10px; }
.t-bat { margin: 22px 0 0 10px; }
.clock { width: 98px; align-items: flex-end; }
.taskbar .clock span { letter-spacing: -.1px; }
```
